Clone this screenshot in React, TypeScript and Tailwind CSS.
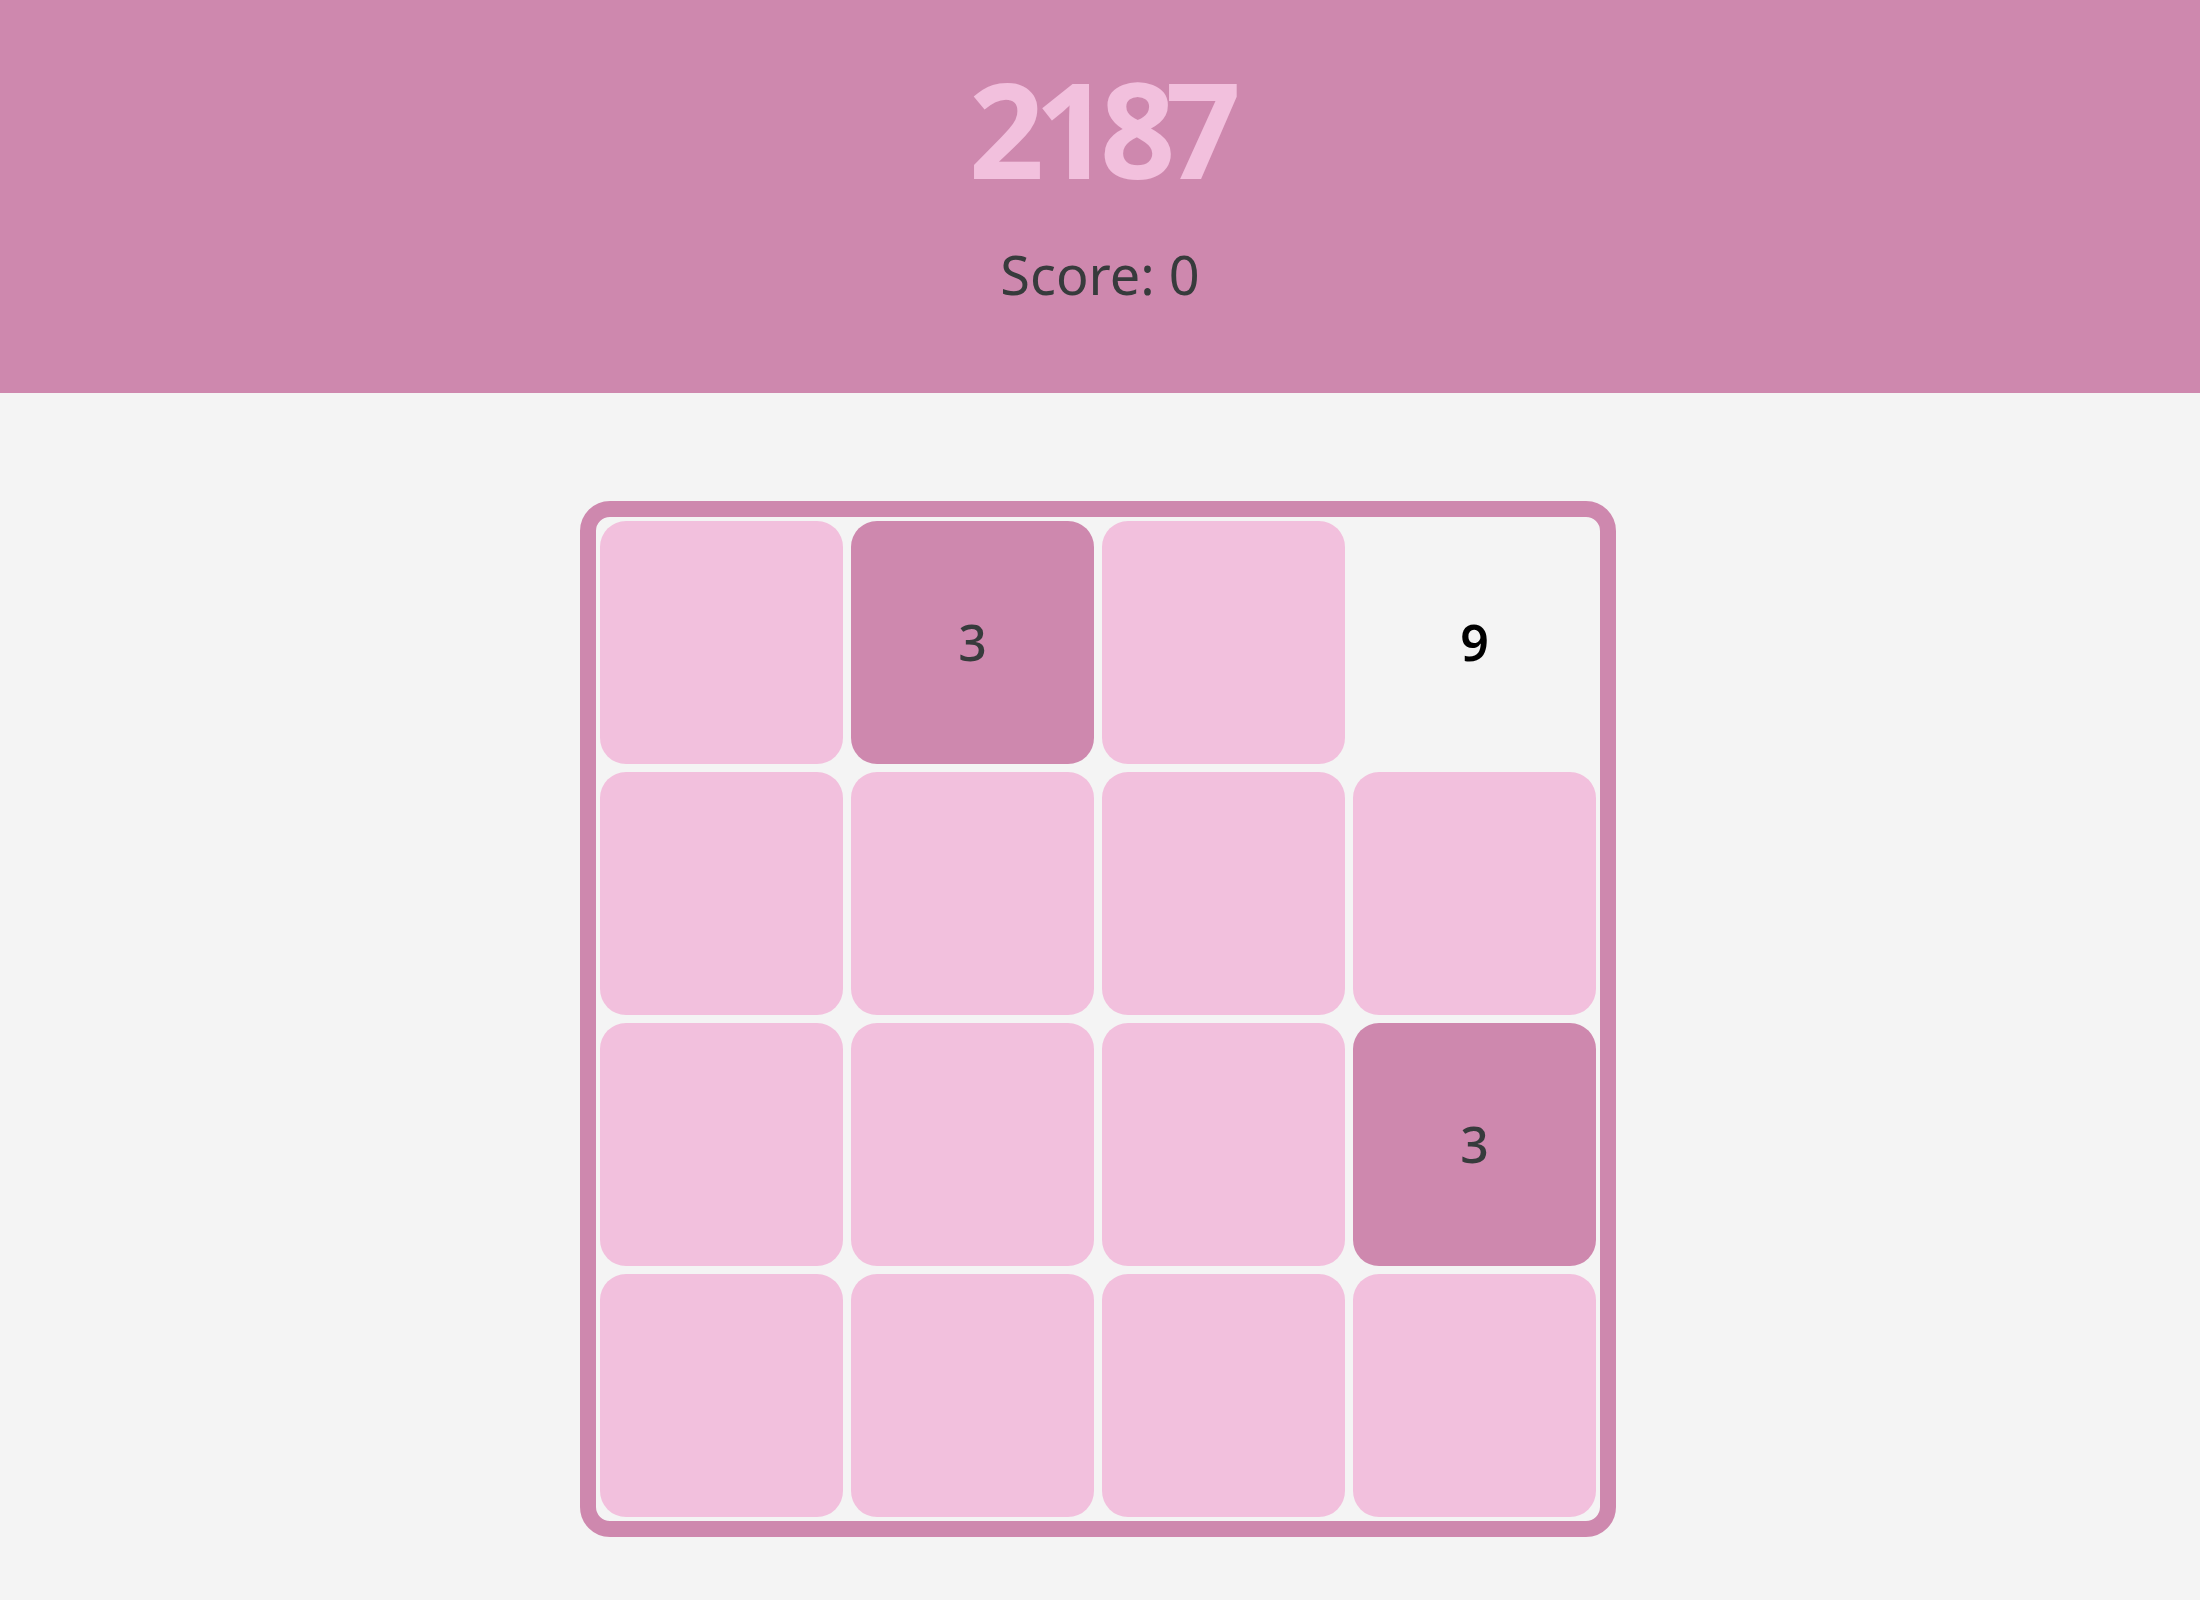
const board: (number | null)[][] = [
  [0, 3, 0, 9],
  [0, 0, 0, 0],
  [0, 0, 0, 3],
  [0, 0, 0, 0],
];

const Tile = ({ value }: { value: number | null }) => {
  if (value === 9) {
    return (
      <div className="w-[243px] h-[243px] flex items-center justify-center text-[50px] font-semibold text-black">
        9
      </div>
    );
  }
  if (value === 3) {
    return (
      <div className="w-[243px] h-[243px] rounded-[26px] bg-[#ce88ae] flex items-center justify-center text-[50px] font-medium text-[#373b3c]">
        3
      </div>
    );
  }
  return <div className="w-[243px] h-[243px] rounded-[26px] bg-[#f2c0dd]" />;
};

export default function App() {
  return (
    <div
      className="min-h-screen bg-[#f4f4f4]"
      style={{ fontFamily: '"Noto Sans", "Open Sans", sans-serif' }}
    >
      <header className="h-[393px] bg-[#ce88ae] flex flex-col items-center">
        <h1 className="mt-[49px] text-[132px] leading-[1.2] font-bold tracking-[-0.075em] text-[#f2c0dd]">
          2187
        </h1>
        <p className="mt-[35px] text-[54px] leading-[1.2] text-[#373b3c]">Score: 0</p>
      </header>
      <main className="pt-[108px] pb-[64px] flex justify-center">
        <div className="mr-[4px] border-[16px] border-[#ce88ae] rounded-[30px] p-[4px] grid grid-cols-4 gap-[8px]">
          {board.flat().map((v, i) => (
            <Tile key={i} value={v} />
          ))}
        </div>
      </main>
    </div>
  );
}
